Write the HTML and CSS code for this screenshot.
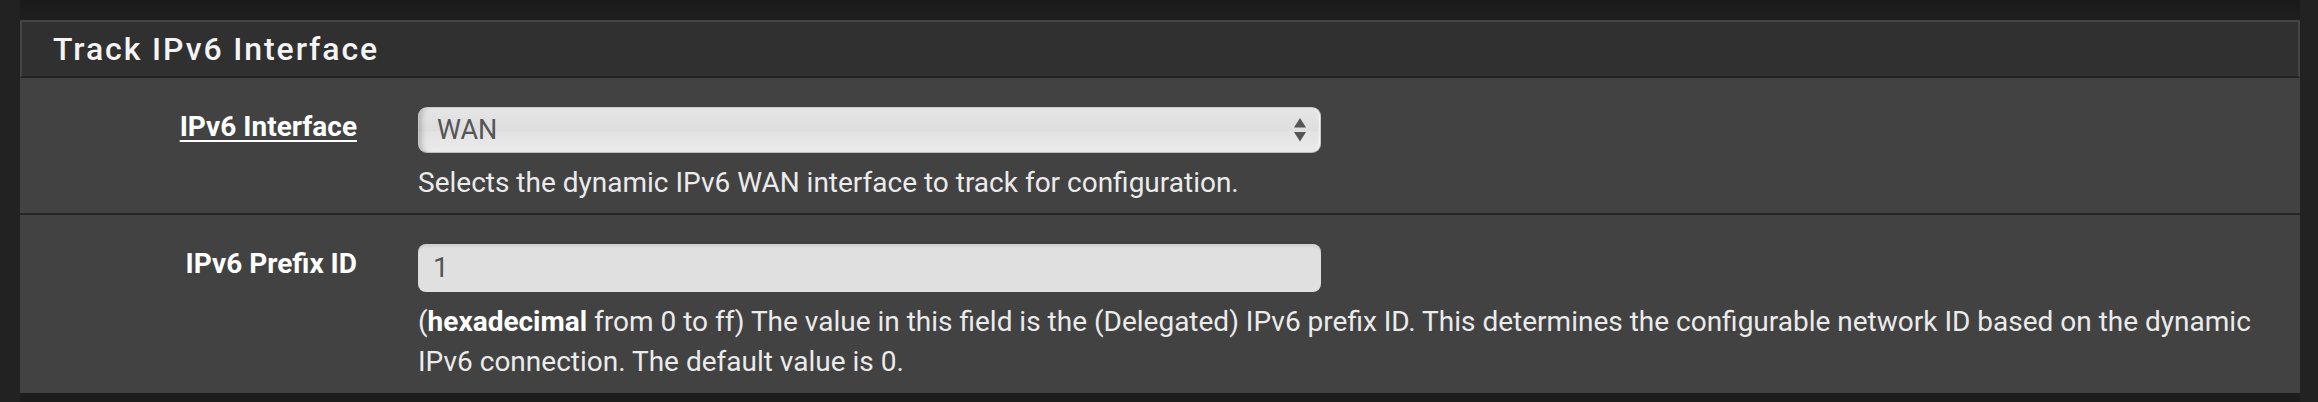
FILE: index.html
```html
<!DOCTYPE html>
<html lang="en">
<head>
<meta charset="utf-8">
<title>Track IPv6 Interface</title>
<link rel="stylesheet" href="styles.css">
</head>
<body>
<div class="page">
  <section class="panel">
    <header class="panel-heading">
      <h2 class="panel-title">Track IPv6 Interface</h2>
    </header>
    <div class="panel-body">
      <div class="form-row">
        <div class="label-col"><a class="label-link" href="#">IPv6 Interface</a></div>
        <div class="control-col">
          <div class="select">
            <span class="select-value">WAN</span>
            <svg class="select-arrows" width="12" height="24" viewBox="0 0 12 24" aria-hidden="true">
              <polygon points="6,0 12,9.5 0,9.5" fill="#555"/>
              <polygon points="0,14 12,14 6,23.5" fill="#555"/>
            </svg>
          </div>
          <p class="help">Selects the dynamic IPv6 WAN interface to track for configuration.</p>
        </div>
      </div>
      <div class="form-row last">
        <div class="label-col"><span class="label-text">IPv6 Prefix ID</span></div>
        <div class="control-col">
          <div class="input">1</div>
          <p class="help">(<b>hexadecimal</b> from 0 to ff) The value in this field is the (Delegated) IPv6 prefix ID. This determines the configurable network ID based on the dynamic IPv6 connection. The default value is 0.</p>
        </div>
      </div>
    </div>
  </section>
</div>
</body>
</html>
```
FILE: styles.css
```css
html, body {
  margin: 0;
  padding: 0;
}
body {
  background: #222222;
  font-family: Roboto, "Liberation Sans", Arial, sans-serif;
  font-size: 28px;
  line-height: 40px;
  color: #ebebeb;
}
.page {
  margin: 0 18px 0 20px;
  min-height: 402px;
  padding-top: 20px;
  box-sizing: border-box;
  background: linear-gradient(to bottom, #1a1a1a, #1e1e1e 20px, #1c1c1c);
}
.panel {
  background: #424242;
}
.panel-heading {
  height: 54px;
  background: #303030;
  border: 2px solid #444444;
  border-bottom: 2px solid #222222;
  padding-left: 31px;
}
.panel-title {
  margin: 0;
  font-size: 32px;
  line-height: 54px;
  font-weight: 500;
  letter-spacing: 1.9px;
  color: #f4f4f4;
}
.form-row {
  display: grid;
  grid-template-columns: 337px 1fr;
  padding: 29px 15px 10px 0;
}
.form-row.last {
  padding-bottom: 11px;
}
.form-row + .form-row {
  border-top: 2px solid #262626;
}
.label-col {
  text-align: right;
  font-weight: 700;
  color: #ffffff;
}
.label-link {
  color: #ffffff;
  text-decoration: underline;
  text-decoration-thickness: 2px;
  text-underline-offset: 4px;
}
.control-col {
  padding-left: 61px;
}
.select {
  width: 903px;
  height: 46px;
  box-sizing: border-box;
  display: flex;
  align-items: center;
  justify-content: space-between;
  padding: 0 14px 0 18px;
  border-radius: 9px;
  border: 1px solid #c9c9c9;
  border-bottom-color: #bdbdbd;
  background: linear-gradient(to bottom, #e6e6e6 0%, #dedede 49%, #d6d6d6 50%, #e2e2e2 52%, #ebebeb 100%);
  box-shadow: inset 7px 0 6px -5px rgba(0, 0, 0, 0.25), inset -2px 0 2px -1px rgba(255, 255, 255, 0.8);
  color: #555555;
  font-size: 27px;
}
.select-arrows {
  display: block;
}
.input {
  width: 903px;
  height: 48px;
  box-sizing: border-box;
  padding: 0 15px;
  border-radius: 8px;
  background: #e0e0e0;
  border-top: 1px solid #d0d0d0;
  box-shadow: inset 0 2px 2px rgba(0, 0, 0, 0.06);
  color: #555555;
  font-size: 28px;
  line-height: 46px;
}
.help {
  margin: 10px 0 0 0;
  color: #ebebeb;
}
.help b {
  color: #ffffff;
  font-weight: 700;
}
```
